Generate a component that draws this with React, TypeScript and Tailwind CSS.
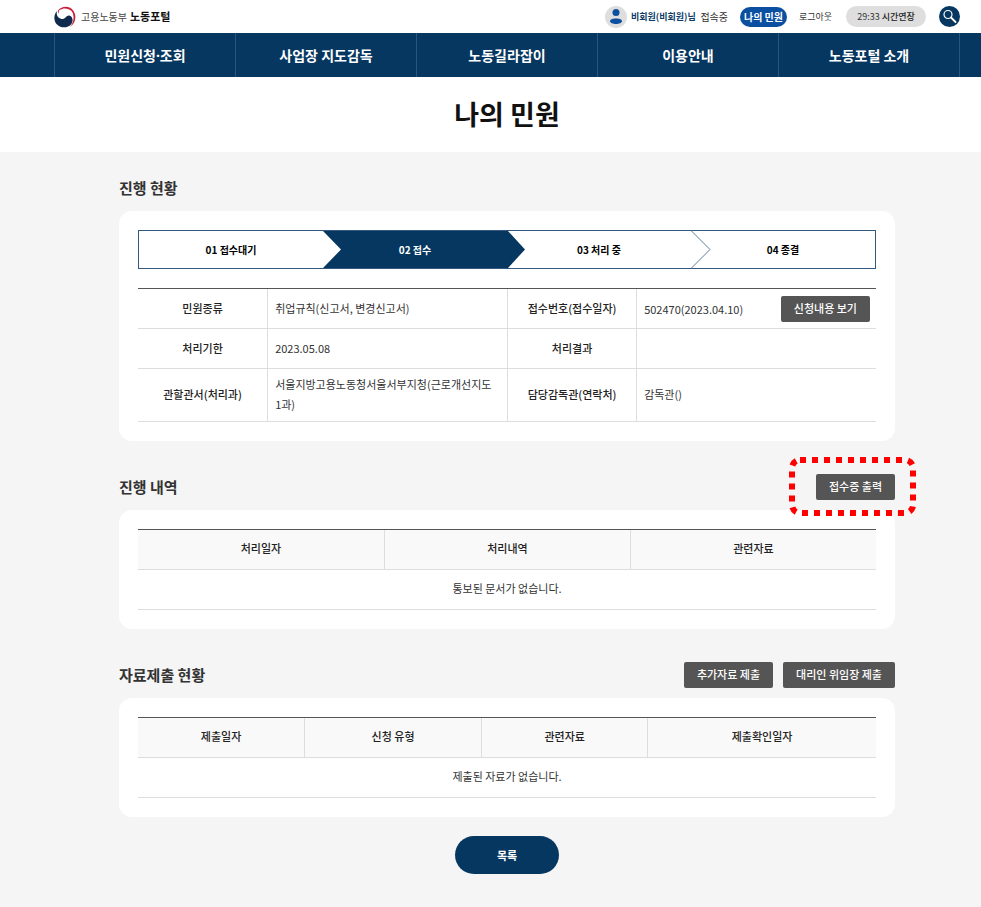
import type { ReactNode } from "react";

const navItems = [["민원신청", "조회"], ["사업장 지도감독"], ["노동길라잡이"], ["이용안내"], ["노동포털 소개"]];

function GovLogo() {
  return (
    <svg viewBox="0 0 44 44" className="size-[22px] shrink-0" aria-hidden="true">
      <path d="M8 9 C16 -1 32 -1 39 10 C46 21 43 35 32 42 C38 34 40 27 38 20 C36 13 31 11 26 13 C20 16 17 19 12 17 C8 15 7 12 8 9 Z" fill="#c8203a" />
      <path d="M11 8 C19 3 29 4 35 10 C40 16 40 26 36 34 C38 26 36 18 29 16 C23 15 21 22 15 21 C9 20 8 12 11 8 Z" fill="#fff" />
      <path d="M6 10 C-1 18 -1 30 6 37 C14 45 28 44 34 37 C39 31 38 21 31 19 C25 18 23 26 16 26 C8 25 4 18 6 10 Z" fill="#0f2a4d" />
    </svg>
  );
}

function DarkButton({ children }: { children: ReactNode }) {
  return (
    <button type="button" className="h-[26px] shrink-0 rounded-[2px] bg-[#555] px-[13px] pb-[2px] text-[11px] leading-5 font-medium whitespace-nowrap text-white">
      {children}
    </button>
  );
}

function Section({ title, actions, children }: { title: string; actions?: ReactNode; children: ReactNode }) {
  return (
    <section>
      <div className="mb-[10px] flex h-[26px] items-center justify-between">
        <h2 className="text-[15px] leading-6 font-bold text-[#333]">{title}</h2>
        <div className="flex gap-[10px]">{actions}</div>
      </div>
      <div className="rounded-[13px] bg-white p-[19px]">{children}</div>
    </section>
  );
}

function Steps() {
  return (
    <ol className="mb-[19px] grid h-[39px] grid-cols-4 border border-[#34597f] text-[10px] font-bold text-black">
      <li className="flex items-center justify-center pb-px">01 접수대기</li>
      <li className="relative flex items-center justify-center bg-[#053761] pb-px text-white" aria-current="step">
        <svg viewBox="0 0 19 37" className="absolute top-0 left-0 h-[37px] w-[19px]" aria-hidden="true">
          <path d="M0 0 L18 18.500 L0 37 Z" fill="#fff" />
        </svg>
        02 접수
      </li>
      <li className="relative flex items-center justify-center pb-px">
        <svg viewBox="0 0 19 39" className="absolute -top-px left-0 h-[39px] w-[19px]" aria-hidden="true">
          <path d="M0 0 L18 19.500 L0 39 Z" fill="#053761" />
        </svg>
        03 처리 중
      </li>
      <li className="relative flex items-center justify-center pb-px">
        <svg viewBox="0 0 20 39" className="absolute -top-px left-0 h-[39px] w-5" aria-hidden="true">
          <path d="M0 0.500 L19 19.500 L0 38.500" fill="none" stroke="#5f7c99" strokeWidth="1" />
        </svg>
        04 종결
      </li>
    </ol>
  );
}

const infoTh = "border-b border-[#ddd] px-2 pb-[2px] text-center font-medium text-[#222]";
const infoTd = "border-b border-l border-[#ddd] pr-[10px] pb-[2px] pl-[7px] text-[#333]";

function InfoTable() {
  return (
    <table className="w-full table-fixed border-separate border-spacing-0 border-t border-[#555] text-[11px] leading-5">
      <colgroup>
        <col className="w-[17.5%]" />
        <col className="w-[32.5%]" />
        <col className="w-[17.5%]" />
        <col className="w-[32.5%]" />
      </colgroup>
      <tbody>
        <tr className="h-10">
          <th scope="row" className={infoTh}>민원종류</th>
          <td className={infoTd}>취업규칙(신고서, 변경신고서)</td>
          <th scope="row" className={`border-l ${infoTh}`}>접수번호(접수일자)</th>
          <td className="border-b border-l border-[#ddd] pr-[6px] pl-[7px]">
            <div className="flex items-center justify-between">
              <span>502470(2023.04.10)</span>
              <DarkButton>신청내용 보기</DarkButton>
            </div>
          </td>
        </tr>
        <tr className="h-10">
          <th scope="row" className={infoTh}>처리기한</th>
          <td className={infoTd}>2023.05.08</td>
          <th scope="row" className={`border-l ${infoTh}`}>처리결과</th>
          <td className={infoTd}></td>
        </tr>
        <tr className="h-[53px]">
          <th scope="row" className={infoTh}>관할관서(처리과)</th>
          <td className={infoTd}>서울지방고용노동청서울서부지청(근로개선지도1과)</td>
          <th scope="row" className={`border-l ${infoTh}`}>담당감독관(연락처)</th>
          <td className={infoTd}>감독관()</td>
        </tr>
      </tbody>
    </table>
  );
}

function ListTable({ columns, empty }: { columns: { label: string; width: string }[]; empty: string }) {
  return (
    <table className="w-full table-fixed border-separate border-spacing-0 border-t border-[#555] text-center text-[11px] leading-5">
      <thead>
        <tr className="h-10">
          {columns.map((c) => (
            <th key={c.label} scope="col" className={`border-b border-l border-[#ddd] bg-[#f9f9f9] pb-[3px] font-medium text-[#222] first:border-l-0 ${c.width}`}>
              {c.label}
            </th>
          ))}
        </tr>
      </thead>
      <tbody>
        <tr className="h-10">
          <td colSpan={columns.length} className="border-b border-[#ddd] pb-[3px] text-[#333]">{empty}</td>
        </tr>
      </tbody>
    </table>
  );
}

export default function App() {
  return (
    <div className="min-h-screen bg-[#f5f5f5] font-['Noto_Sans_CJK_KR','Noto_Sans',sans-serif] text-[#333]">
      <header className="bg-white">
        <div className="flex h-[33px] items-center justify-between pr-[21px] pl-[54px]">
          <a href="#" className="flex items-center whitespace-nowrap">
            <GovLogo />
            <span className="ml-[5px] text-[10px] text-[#444]">고용노동부</span>
            <span className="ml-[3px] text-[11px] font-bold text-[#111]">노동포털</span>
          </a>
          <div className="flex items-center text-[9px] whitespace-nowrap">
            <svg viewBox="0 0 22 22" className="size-[22px]" aria-hidden="true">
              <circle cx="11" cy="11" r="11" fill="#dedede" />
              <circle cx="11" cy="6.500" r="3.500" fill="#0b50a0" />
              <path d="M5 15 C5 11.500 17 11.500 17 15 C17 19 5 19 5 15 Z" fill="#0b50a0" />
            </svg>
            <p className="ml-1 flex w-[97px] items-center justify-between">
              <strong className="font-bold text-[#0b3b66]">비회원(비회원)님</strong>
              <span className="text-[10px]">접속중</span>
            </p>
            <a href="#" className="ml-3 flex h-5 w-[47px] items-center justify-center rounded-full bg-[#0b50a0] text-[10px] font-bold text-white">나의 민원</a>
            <a href="#" className="ml-3 w-[34px]">로그아웃</a>
            <button type="button" className="ml-[13px] flex h-[21px] w-20 items-center justify-center gap-[2px] rounded-full bg-[#dedede]">
              <span>29:33</span>
              <span className="font-medium text-[#222]">시간연장</span>
            </button>
            <button type="button" aria-label="검색" className="ml-[13px] flex size-[21px] items-center justify-center rounded-full bg-[#053761]">
              <svg viewBox="0 0 21 21" className="size-[21px]" fill="none" stroke="#fff" aria-hidden="true">
                <circle cx="9" cy="8.500" r="4" strokeWidth="1.200" />
                <path d="M12 11.500 L16.500 16" strokeWidth="1.800" strokeLinecap="round" />
              </svg>
            </button>
          </div>
        </div>
        <nav className="bg-[#053761] pr-[21px] pl-[54px]">
          <ul className="grid h-11 grid-cols-5 border-r border-[#2b5579]">
            {navItems.map((parts) => (
              <li key={parts[0]} className="border-l border-[#2b5579]">
                <a href="#" className="flex h-full items-center justify-center text-[14px] font-bold text-white">
                  {parts[0]}
                  {parts[1] && (
                    <>
                      <span className="font-['Noto_Sans']">·</span>
                      {parts[1]}
                    </>
                  )}
                </a>
              </li>
            ))}
          </ul>
        </nav>
        <div className="flex h-[75px] items-center justify-center pr-[21px] pb-[2px] pl-[54px]">
          <h1 className="text-[27px] leading-10 font-bold text-[#111]">나의 민원</h1>
        </div>
      </header>

      <main className="flex flex-col gap-[33px] pt-[23px] pr-[86px] pb-8 pl-[119px]">
        <Section title="진행 현황">
          <Steps />
          <InfoTable />
        </Section>

        <Section
          title="진행 내역"
          actions={
            <div className="relative flex">
              <DarkButton>접수증 출력</DarkButton>
              <svg viewBox="0 0 127 59" className="pointer-events-none absolute -top-[17px] -right-[21px] h-[59px] w-[127px]" aria-hidden="true">
                <rect x="3" y="3" width="121" height="53" rx="8" fill="none" stroke="#f00" strokeWidth="6" strokeDasharray="6 6" />
              </svg>
            </div>
          }
        >
          <ListTable
            columns={[
              { label: "처리일자", width: "w-1/3" },
              { label: "처리내역", width: "w-1/3" },
              { label: "관련자료", width: "w-1/3" },
            ]}
            empty="통보된 문서가 없습니다."
          />
        </Section>

        <div>
          <Section
            title="자료제출 현황"
            actions={
              <>
                <DarkButton>추가자료 제출</DarkButton>
                <DarkButton>대리인 위임장 제출</DarkButton>
              </>
            }
          >
            <ListTable
              columns={[
                { label: "제출일자", width: "w-[22.5%]" },
                { label: "신청 유형", width: "w-[24%]" },
                { label: "관련자료", width: "w-[22.5%]" },
                { label: "제출확인일자", width: "w-[31%]" },
              ]}
              empty="제출된 자료가 없습니다."
            />
          </Section>
          <div className="mt-[19px] flex justify-center">
            <button type="button" className="h-[38px] w-[104px] rounded-full bg-[#053761] text-[11px] font-bold text-white">목록</button>
          </div>
        </div>
      </main>
    </div>
  );
}
